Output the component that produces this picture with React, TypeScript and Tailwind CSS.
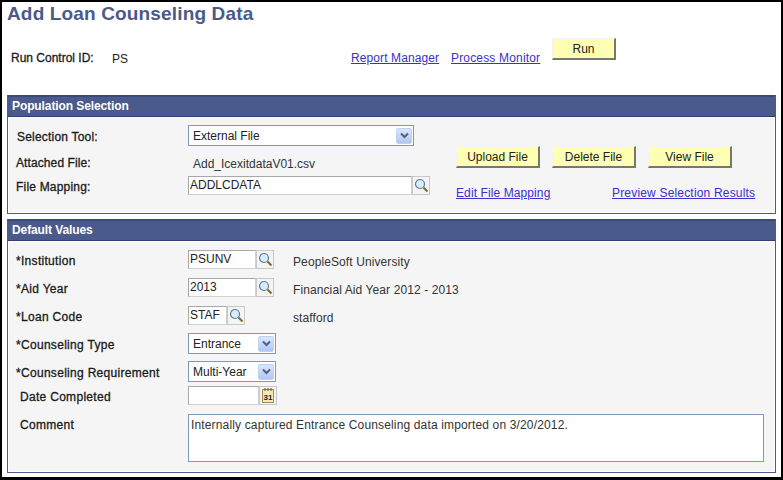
import React from 'react';

const linkClass = 'text-[#3a2fd0] underline tracking-[0.1px]';
const labelClass = 'text-[#1a1a1a] [-webkit-text-stroke:0.3px]';

const Lookup = () => (
  <div className="flex h-[19px] w-[18px] items-center justify-center border border-[#c8c8c8] bg-[#f4f4f4]">
    <svg width="15" height="15" viewBox="0 0 15 15">
      <path d="M9.5 9.5 L13.5 13.5" stroke="#7a7030" strokeWidth="2.2" />
      <circle cx="6" cy="6" r="4.5" fill="#d8ecfa" stroke="#5f7a90" strokeWidth="1.2" />
    </svg>
  </div>
);

const Calendar = () => (
  <div className="flex h-[19px] w-[18px] items-center justify-center border border-[#c8c8c8] bg-[#f4f4f4]">
    <svg width="14" height="17" viewBox="0 0 14 17">
      <rect x="1.5" y="2.5" width="11" height="13" fill="#f6e8b0" stroke="#a08c58" />
      <path d="M4 1v3M7 1v3M10 1v3" stroke="#5a5030" />
      <text x="7" y="12.5" fontSize="8" fontWeight="bold" textAnchor="middle" fill="#222" fontFamily="Liberation Sans, sans-serif">31</text>
    </svg>
  </div>
);

const Dropdown = ({ value, width }: { value: string; width: string }) => (
  <div className={`flex h-[21px] ${width} items-center justify-between border border-[#7c9abf] bg-white pl-[4px] pr-[1px]`}>
    <span className="text-[#222]">{value}</span>
    <div className="flex h-[16px] w-[16px] items-center justify-center rounded-[2px] border border-[#c0d2f2] bg-gradient-to-b from-[#dbe6fb] to-[#b0c6f4]">
      <svg width="9" height="7" viewBox="0 0 9 7">
        <path d="M1 1.5 L4.5 5 L8 1.5" fill="none" stroke="#4d6185" strokeWidth="2" />
      </svg>
    </div>
  </div>
);

const TextBox = ({ value, width }: { value: string; width: string }) => (
  <div className={`h-[19px] ${width} border border-[#a8a8a8] border-b-[#d0d0d0] border-r-[#d0d0d0] bg-white pl-[1px] leading-[16px] text-[#222]`}>
    {value}
  </div>
);

const YellowButton = ({ label, width }: { label: string; width: string }) => (
  <div className={`flex h-[22px] ${width} items-center justify-center border border-[#f4f4f4] border-b-2 border-r-2 border-b-[#77776a] border-r-[#77776a] bg-[#ffffb3] text-[#222]`}>
    {label}
  </div>
);

const PanelHeader = ({ title }: { title: string }) => (
  <div className="h-[22px] border-b border-[#2f3f73] border-t-2 border-t-[#3a4a7c] bg-[#4a5a8a] pl-[4px] text-[12px] font-bold leading-[19px] tracking-[-0.1px] text-white">
    {title}
  </div>
);

// one labelled line in the Default Values panel
const FieldRow = ({ label, indent, height, note, tall, children }: { label: string; indent?: boolean; height: string; note?: string; tall?: boolean; children: React.ReactNode }) => (
  <div className={`flex ${height} items-start`}>
    <div className={`${indent ? 'pl-[4px]' : ''} ${tall ? 'pt-[3px]' : 'pt-[2px]'} w-[172px] tracking-[0.3px] ${labelClass}`}>{label}</div>
    <div className="flex w-[105px]">{children}</div>
    {note && <div className="pt-[3px] tracking-[0.1px] text-[#333]">{note}</div>}
  </div>
);

export default function App() {
  return (
    <div className="h-[480px] w-[783px] overflow-hidden bg-black pb-[3px] pl-[2px] pr-[2px] pt-[2px] font-['Liberation_Sans',Arial,sans-serif] text-[12px]">
      <div className="h-[475px] bg-white pl-[5px] pr-[5px]">
        <h1 className="h-[24px] text-[19px] font-bold leading-[24px] tracking-[0.15px] text-[#4a5a8a]">Add Loan Counseling Data</h1>

        {/* Run control */}
        <div className="flex h-[69px] items-start pl-[4px] pt-[12px]">
          <div className={`w-[101px] pt-[11px] ${labelClass}`}>Run Control ID:</div>
          <div className="w-[239px] pt-[12px] text-[#222]">PS</div>
          <a className={`w-[100px] pt-[11px] ${linkClass}`}>Report Manager</a>
          <a className={`w-[101px] pt-[11px] tracking-[0.17px] text-[#3a2fd0] underline`}>Process Monitor</a>
          <YellowButton label="Run" width="w-[64px]" />
        </div>

        {/* Population Selection */}
        <div className="w-[769px] border-x border-b border-[#4a5a8a]">
          <PanelHeader title="Population Selection" />
          <div className="flex h-[96px] border border-white bg-[#f5f5f5] pl-[7px] pt-[7px]">
            <div className="w-[440px]">
              <div className="flex h-[26px] items-start">
                <div className={`w-[172px] pl-[1px] pt-[3px] tracking-[0.2px] ${labelClass}`}>Selection Tool:</div>
                <Dropdown value="External File" width="w-[226px]" />
              </div>
              <div className="flex h-[25px] items-start">
                <div className={`w-[177px] pt-[3px] tracking-[0.1px] ${labelClass}`}>Attached File:</div>
                <div className="pt-[4px] text-[#333]">Add_IcexitdataV01.csv</div>
              </div>
              <div className="flex items-start">
                <div className={`w-[172px] pt-[2px] tracking-[0.2px] ${labelClass}`}>File Mapping:</div>
                <TextBox value="ADDLCDATA" width="w-[224px]" />
                <Lookup />
              </div>
            </div>
            <div className="pt-[21px]">
              <div className="flex gap-[12px]">
                <YellowButton label="Upload File" width="w-[84px]" />
                <YellowButton label="Delete File" width="w-[84px]" />
                <YellowButton label="View File" width="w-[84px]" />
              </div>
              <div className="flex pt-[16px]">
                <a className={`w-[156px] ${linkClass}`}>Edit File Mapping</a>
                <a className="tracking-[0.18px] text-[#3a2fd0] underline">Preview Selection Results</a>
              </div>
            </div>
          </div>
        </div>

        {/* Default Values */}
        <div className="mt-[5px] w-[769px] border-x border-b border-[#4a5a8a]">
          <PanelHeader title="Default Values" />
          <div className="h-[231px] border border-white bg-[#f5f5f5] pl-[7px] pt-[8px]">
            <FieldRow label="*Institution" height="h-[28px]" note="PeopleSoft University">
              <TextBox value="PSUNV" width="w-[68px]" />
              <Lookup />
            </FieldRow>
            <FieldRow label="*Aid Year" height="h-[28px]" note="Financial Aid Year 2012 - 2013">
              <TextBox value="2013" width="w-[68px]" />
              <Lookup />
            </FieldRow>
            <FieldRow label="*Loan Code" height="h-[27px]" note="stafford">
              <TextBox value="STAF" width="w-[39px]" />
              <Lookup />
            </FieldRow>
            <FieldRow label="*Counseling Type" tall height="h-[28px]">
              <Dropdown value="Entrance" width="w-[88px]" />
            </FieldRow>
            <FieldRow label="*Counseling Requirement" tall height="h-[25px]">
              <Dropdown value="Multi-Year" width="w-[88px]" />
            </FieldRow>
            <FieldRow label="Date Completed" indent height="h-[28px]">
              <TextBox value="" width="w-[71px]" />
              <Calendar />
            </FieldRow>
            <div className="flex items-start">
              <div className={`w-[172px] pl-[4px] pt-[2px] tracking-[0.3px] ${labelClass}`}>Comment</div>
              <div className="h-[48px] w-[576px] border border-[#7c9abf] bg-white pl-[2px] pt-[1px] tracking-[0.15px] text-[#333]">
                Internally captured Entrance Counseling data imported on 3/20/2012.
              </div>
            </div>
          </div>
        </div>
      </div>
    </div>
  );
}
